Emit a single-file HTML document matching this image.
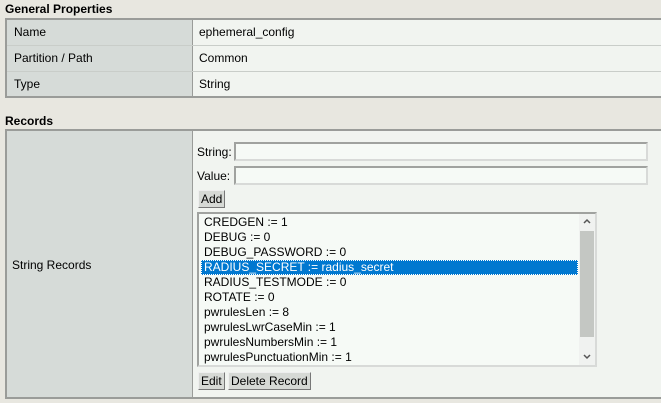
<!DOCTYPE html>
<html><head><style>
body{margin:0;width:661px;height:403px;background:#e8e7e0;font-family:"Liberation Sans",sans-serif;font-size:12px;color:#000;position:relative;overflow:hidden}
.h{position:absolute;left:5px;font-weight:bold;font-size:12px}
.box{position:absolute;left:5px;width:660px;border:2px solid #9a9c99;border-right:none;box-sizing:border-box;background:#f1f4f0}
.lab{position:absolute;left:0;width:186px;background:#d6dbd8;border-right:1px solid #9a9c99;box-sizing:border-box}
.row{position:absolute;left:0;right:0;height:26px;border-bottom:1px solid #c9cdc9;box-sizing:border-box}
.t{position:absolute;top:5px}
.in{position:absolute;height:19px;border:2px solid #a0a29f;border-right-color:#d8dad8;border-bottom-color:#d8dad8;background:#f6faf6;box-sizing:border-box}
.btn{position:absolute;height:18px;border:1px solid #888;background:#d6d9d5;box-sizing:border-box;font-size:12px;line-height:16px;padding:0 2px;border-top-color:#eee;border-left-color:#eee;border-right-color:#777;border-bottom-color:#777}
.lb{position:absolute;left:197px;top:212px;width:400px;height:155px;border:2px solid #a0a29f;border-right-color:#d8dad8;border-bottom-color:#d8dad8;background:#f6faf6;box-sizing:border-box}
.it{position:absolute;left:2px;height:15px;line-height:15px;padding-left:3px;width:374px}
.sel{background:#0078d0;color:#fff;outline:1px dotted #fff;outline-offset:-1px}
</style></head><body>
<div class="h" style="top:2px">General Properties</div>
<div class="box" style="top:18px;height:80px">
 <div class="lab" style="top:0;height:76px"></div>
 <div class="row" style="top:0"><span class="t" style="left:7px">Name</span><span class="t" style="left:192px">ephemeral_config</span></div>
 <div class="row" style="top:26px"><span class="t" style="left:7px">Partition / Path</span><span class="t" style="left:192px">Common</span></div>
 <div class="row" style="top:52px;border:none"><span class="t" style="left:7px">Type</span><span class="t" style="left:192px">String</span></div>
</div>
<div class="h" style="top:114px">Records</div>
<div class="box" style="top:129px;height:270px">
 <div class="lab" style="top:0;height:266px"></div>
 <span style="position:absolute;left:5px;top:127px">String Records</span>
</div>
<span style="position:absolute;left:197px;top:145px">String:</span>
<div class="in" style="left:234px;top:142px;width:414px"></div>
<span style="position:absolute;left:197px;top:169px">Value:</span>
<div class="in" style="left:234px;top:166px;width:414px"></div>
<div class="btn" style="left:198px;top:190px">Add</div>
<div class="lb">
 <div class="it" style="top:1px">CREDGEN := 1</div>
 <div class="it" style="top:16px">DEBUG := 0</div>
 <div class="it" style="top:31px">DEBUG_PASSWORD := 0</div>
 <div class="it sel" style="top:46px">RADIUS_SECRET := radius_secret</div>
 <div class="it" style="top:61px">RADIUS_TESTMODE := 0</div>
 <div class="it" style="top:76px">ROTATE := 0</div>
 <div class="it" style="top:91px">pwrulesLen := 8</div>
 <div class="it" style="top:106px">pwrulesLwrCaseMin := 1</div>
 <div class="it" style="top:121px">pwrulesNumbersMin := 1</div>
 <div class="it" style="top:136px">pwrulesPunctuationMin := 1</div>
 <div style="position:absolute;left:380px;top:0;width:16px;height:151px;background:#f0f2f0">
  <svg style="position:absolute;top:4px;left:4px" width="8" height="6"><path d="M1 5L4 2L7 5" fill="none" stroke="#555" stroke-width="1.5"/></svg>
  <div style="position:absolute;top:17px;left:1px;width:14px;height:106px;background:#c4c7c3"></div>
  <svg style="position:absolute;top:140px;left:4px" width="8" height="6"><path d="M1 1L4 4L7 1" fill="none" stroke="#555" stroke-width="1.5"/></svg>
 </div>
</div>
<div class="btn" style="left:198px;top:372px">Edit</div>
<div class="btn" style="left:228px;top:372px;width:83px">Delete Record</div>
</body></html>
